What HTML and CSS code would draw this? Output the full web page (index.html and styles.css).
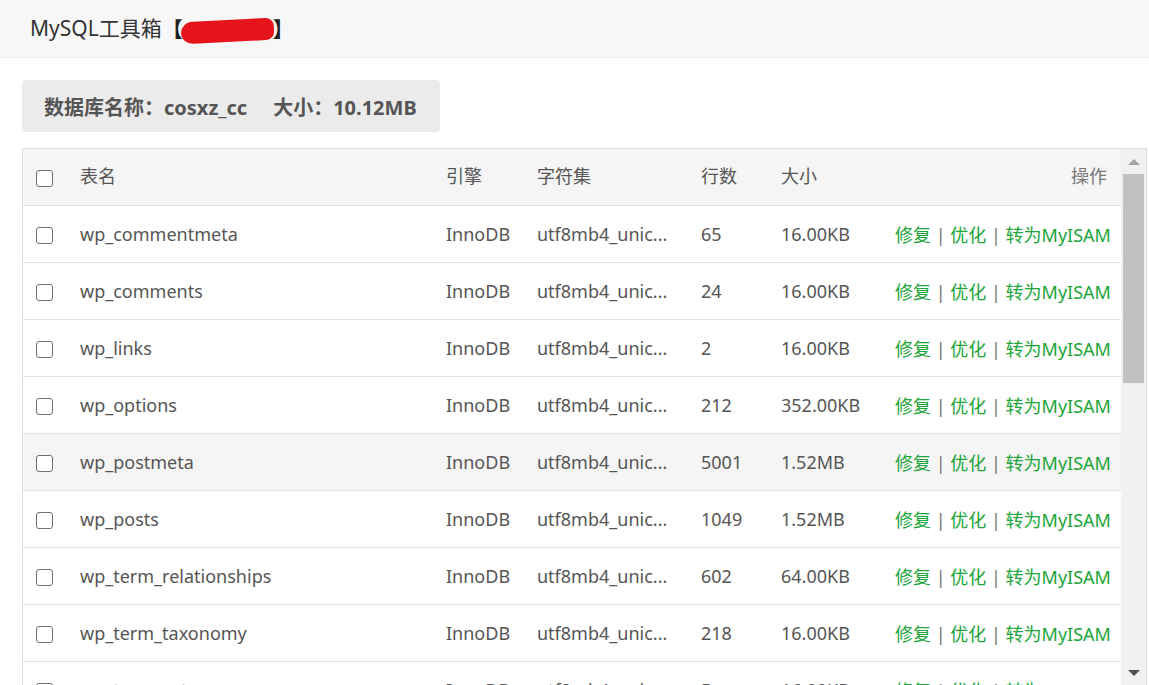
FILE: index.html
```html
<!DOCTYPE html>
<html lang="zh-CN">
<head>
<meta charset="utf-8">
<title>MySQL工具箱</title>
<link rel="stylesheet" href="styles.css">
</head>
<body>
<div class="page">
  <header class="topbar">
    <span class="title">MySQL工具箱<span class="br">【</span><span class="redact"></span><span class="br">】</span></span>
  </header>
  <div class="content">
    <div class="dbinfo">
      <span>数据库名称：cosxz_cc</span>
      <span>大小：10.12MB</span>
    </div>
    <div class="tablebox">
      <div class="tablearea">
        <table class="tbl">
          <colgroup>
            <col class="c-chk"><col class="c-name"><col class="c-eng"><col class="c-cs"><col class="c-rows"><col class="c-size"><col class="c-act">
          </colgroup>
          <thead>
            <tr><th><span class="chk"></span></th><th>表名</th><th>引擎</th><th>字符集</th><th>行数</th><th>大小</th><th class="act">操作</th></tr>
          </thead>
          <tbody>
            <tr><td><span class="chk"></span></td><td>wp_commentmeta</td><td>InnoDB</td><td>utf8mb4_unic...</td><td>65</td><td>16.00KB</td><td class="act"><a>修复</a> | <a>优化</a> | <a>转为MyISAM</a></td></tr>
            <tr><td><span class="chk"></span></td><td>wp_comments</td><td>InnoDB</td><td>utf8mb4_unic...</td><td>24</td><td>16.00KB</td><td class="act"><a>修复</a> | <a>优化</a> | <a>转为MyISAM</a></td></tr>
            <tr><td><span class="chk"></span></td><td>wp_links</td><td>InnoDB</td><td>utf8mb4_unic...</td><td>2</td><td>16.00KB</td><td class="act"><a>修复</a> | <a>优化</a> | <a>转为MyISAM</a></td></tr>
            <tr><td><span class="chk"></span></td><td>wp_options</td><td>InnoDB</td><td>utf8mb4_unic...</td><td>212</td><td>352.00KB</td><td class="act"><a>修复</a> | <a>优化</a> | <a>转为MyISAM</a></td></tr>
            <tr class="hover"><td><span class="chk"></span></td><td>wp_postmeta</td><td>InnoDB</td><td>utf8mb4_unic...</td><td>5001</td><td>1.52MB</td><td class="act"><a>修复</a> | <a>优化</a> | <a>转为MyISAM</a></td></tr>
            <tr><td><span class="chk"></span></td><td>wp_posts</td><td>InnoDB</td><td>utf8mb4_unic...</td><td>1049</td><td>1.52MB</td><td class="act"><a>修复</a> | <a>优化</a> | <a>转为MyISAM</a></td></tr>
            <tr><td><span class="chk"></span></td><td>wp_term_relationships</td><td>InnoDB</td><td>utf8mb4_unic...</td><td>602</td><td>64.00KB</td><td class="act"><a>修复</a> | <a>优化</a> | <a>转为MyISAM</a></td></tr>
            <tr><td><span class="chk"></span></td><td>wp_term_taxonomy</td><td>InnoDB</td><td>utf8mb4_unic...</td><td>218</td><td>16.00KB</td><td class="act"><a>修复</a> | <a>优化</a> | <a>转为MyISAM</a></td></tr>
            <tr><td><span class="chk"></span></td><td>wp_termmeta</td><td>InnoDB</td><td>utf8mb4_unic...</td><td>5</td><td>16.00KB</td><td class="act"><a>修复</a> | <a>优化</a> | <a>转为MyISAM</a></td></tr>
          </tbody>
        </table>
      </div>
      <div class="scrollbar">
        <div class="sb-btn"><span class="tri-up"></span></div>
        <div class="sb-track"><div class="sb-thumb"></div></div>
        <div class="sb-btn"><span class="tri-down"></span></div>
      </div>
    </div>
  </div>
</div>
</body>
</html>
```
FILE: styles.css
```css
* { box-sizing: border-box; }
html, body { margin: 0; padding: 0; height: 100%; overflow: hidden; background: #fff; }
body {
  font-family: "Noto Sans", "Noto Sans CJK SC", sans-serif;
  color: #555;
}
.page { height: 685px; display: flex; flex-direction: column; }
.topbar {
  height: 58px;
  flex: none;
  background: #f7f7f7;
  border-bottom: 1px solid #ececec;
  display: flex;
  align-items: center;
  padding-left: 30px;
}
.title {
  font-family: "Noto Sans", "Noto Sans CJK SC", sans-serif;
  font-size: 21px;
  color: #333;
  line-height: 1;
  display: flex;
  align-items: center;
}
.br { font-family: "Noto Sans CJK SC", sans-serif; font-weight: bold; color: #222; }
.redact {
  display: inline-block;
  width: 93px;
  height: 22px;
  margin: 4px -1px 0 -2px;
  background: #e8141c;
  border-radius: 13px 9px 9px 13px / 12px 9px 9px 12px;
  transform: rotate(-3deg);
}
.content { flex: 1; padding: 22px 2px 0 22px; display: flex; flex-direction: column; min-height: 0; }
.dbinfo {
  flex: none;
  width: 418px;
  height: 52px;
  background: #ebebeb;
  border-radius: 4px;
  display: flex;
  align-items: center;
  gap: 26px;
  padding-left: 22px;
  font-size: 20px;
  font-weight: bold;
  color: #555;
}
.tablebox {
  margin-top: 16px;
  flex: 1;
  min-height: 0;
  border: 1px solid #dedede;
  border-bottom: none;
  display: flex;
}
.tablearea { flex: 1; overflow: hidden; }
.tbl { width: 100%; border-collapse: collapse; table-layout: fixed; font-size: 18px; }
.c-chk { width: 43px; }
.c-name { width: 366px; }
.c-eng { width: 91px; }
.c-cs { width: 164px; }
.c-rows { width: 80px; }
.c-size { width: 114px; }
.tbl th, .tbl td {
  height: 57px;
  padding: 0 14px;
  text-align: left;
  font-weight: normal;
  white-space: nowrap;
  overflow: hidden;
  border-bottom: 1.5px solid #e2e2e2;
  vertical-align: middle;
}
.tbl th:first-child, .tbl td:first-child { padding: 0 0 0 13px; }
.tbl thead th { background: #f5f5f5; color: #555; height: 56px; padding-bottom: 3px; }
.tbl thead th:first-child { padding-bottom: 0; }
.tbl tr.hover td { background: #f5f5f5; }
.tbl .act { text-align: right; padding-right: 14px; color: #777; }
.act a { color: #20a53a; text-decoration: none; }
.chk {
  display: inline-block;
  width: 17px;
  height: 17px;
  border: 1.5px solid #6f6f6f;
  border-radius: 3px;
  background: #fff;
  vertical-align: middle;
}
.scrollbar {
  flex: none;
  width: 25px;
  background: #f1f1f1;
  display: flex;
  flex-direction: column;
}
.sb-btn { height: 25px; display: flex; align-items: center; justify-content: center; flex: none; }
.sb-track { flex: 1; padding: 0 2px; }
.sb-thumb { height: 209px; background: #c1c1c1; }
.tri-up, .tri-down { width: 0; height: 0; border-left: 6px solid transparent; border-right: 6px solid transparent; }
.tri-up { border-bottom: 6px solid #a3a3a3; }
.tri-down { border-top: 6px solid #505050; }
```
